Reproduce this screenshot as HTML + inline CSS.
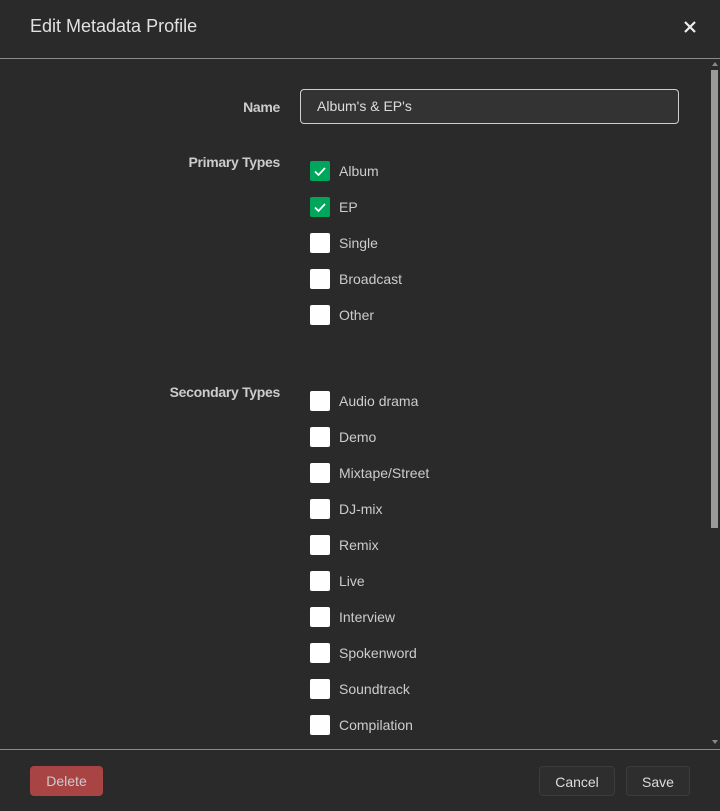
<!DOCTYPE html>
<html><head><style>
body{margin:0;width:720px;height:811px;background:#2a2a2a;font-family:"Liberation Sans",sans-serif;color:#ccc;position:relative;overflow:hidden}
.t{position:absolute;left:30px;top:16px;font-size:18px;color:#e1e1e1}
.x{position:absolute;left:681px;top:18px;width:18px;height:18px}
.hl{position:absolute;left:0;width:720px;height:1px;background:#8a8a8a}
.lbl{position:absolute;right:440px;font-size:14px;font-weight:bold;color:#ccc;letter-spacing:-0.3px}
.inp{position:absolute;left:300px;top:89px;width:377px;height:33px;border:1px solid #cfcfcf;border-radius:4px;background:#333;box-sizing:border-box;width:379px;height:35px;font-size:14px;color:#ddd;padding:8px 16px}
.cb{position:absolute;left:310px;width:20px;height:20px;border-radius:2px;background:#fff}
.cb.on{background:#00a65b}
.cl{position:absolute;left:339px;font-size:14px;color:#ccc}
.btn{position:absolute;top:766px;height:30px;border-radius:4px;font-size:14px;line-height:30px;text-align:center;box-sizing:border-box}
.sb{position:absolute;left:711px;top:70px;width:7px;height:458px;background:#9a9a9a}
</style></head><body>
<div class="t">Edit Metadata Profile</div>
<svg class="x" viewBox="0 0 18 18"><path d="M4 4L14 14M14 4L4 14" stroke="#eee" stroke-width="2.2"/></svg>
<div class="hl" style="top:58px"></div>
<div class="sb"></div>
<div style="position:absolute;left:712px;top:62px;width:0;height:0;border-left:3px solid transparent;border-right:3px solid transparent;border-bottom:4px solid #888"></div>
<div style="position:absolute;left:712px;top:740px;width:0;height:0;border-left:3px solid transparent;border-right:3px solid transparent;border-top:4px solid #888"></div>
<div class="lbl" style="top:99px">Name</div>
<div class="inp">Album's &amp; EP's</div>
<div class="lbl" style="top:154px">Primary Types</div>
<div class="lbl" style="top:384px">Secondary Types</div>

<div class="cb on" style="top:161px"><svg width="20" height="20"><path d="M5 10.5L8.5 14L15 7" stroke="#fff" stroke-width="1.8" fill="none"/></svg></div><div class="cl" style="top:163px">Album</div>
<div class="cb on" style="top:197px"><svg width="20" height="20"><path d="M5 10.5L8.5 14L15 7" stroke="#fff" stroke-width="1.8" fill="none"/></svg></div><div class="cl" style="top:199px">EP</div>
<div class="cb" style="top:233px"></div><div class="cl" style="top:235px">Single</div>
<div class="cb" style="top:269px"></div><div class="cl" style="top:271px">Broadcast</div>
<div class="cb" style="top:305px"></div><div class="cl" style="top:307px">Other</div>

<div class="cb" style="top:391px"></div><div class="cl" style="top:393px">Audio drama</div>
<div class="cb" style="top:427px"></div><div class="cl" style="top:429px">Demo</div>
<div class="cb" style="top:463px"></div><div class="cl" style="top:465px">Mixtape/Street</div>
<div class="cb" style="top:499px"></div><div class="cl" style="top:501px">DJ-mix</div>
<div class="cb" style="top:535px"></div><div class="cl" style="top:537px">Remix</div>
<div class="cb" style="top:571px"></div><div class="cl" style="top:573px">Live</div>
<div class="cb" style="top:607px"></div><div class="cl" style="top:609px">Interview</div>
<div class="cb" style="top:643px"></div><div class="cl" style="top:645px">Spokenword</div>
<div class="cb" style="top:679px"></div><div class="cl" style="top:681px">Soundtrack</div>
<div class="cb" style="top:715px"></div><div class="cl" style="top:717px">Compilation</div>

<div class="hl" style="top:749px"></div>
<div class="btn" style="left:30px;width:73px;background:#a84444;color:#ccc">Delete</div>
<div class="btn" style="left:539px;width:76px;background:#2e2e2e;border:1px solid #3c3c3c;color:#ddd">Cancel</div>
<div class="btn" style="left:626px;width:64px;background:#2e2e2e;border:1px solid #3c3c3c;color:#ddd">Save</div>
</body></html>
